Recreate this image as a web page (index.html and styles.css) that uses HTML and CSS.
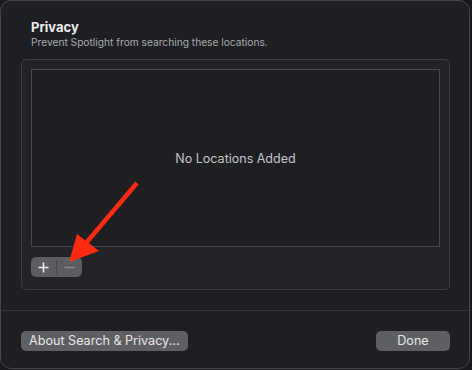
FILE: index.html
```html
<!DOCTYPE html>
<html lang="en">
<head>
  <meta charset="UTF-8" />
  <title>Spotlight Privacy</title>
  <link rel="stylesheet" href="styles.css">
</head>
<body>

  <div class="sheet">
    <div class="sheet-body">
      <div class="heading">
        <h1>Privacy</h1>
        <p>Prevent Spotlight from searching these locations.</p>
      </div>

      <div class="group">
        <div class="locations">No Locations Added</div>
        <div class="seg">
          <span class="seg-btn">
            <svg width="11" height="11" viewBox="0 0 11 11"><path d="M5.5 0.5v10M0.5 5.5h10" stroke="#f0f0f0" stroke-width="1.6"/></svg>
          </span>
          <span class="seg-sep"></span>
          <span class="seg-btn">
            <svg width="11" height="11" viewBox="0 0 11 11"><path d="M0.5 5.5h10" stroke="#8c8d8f" stroke-width="1.4"/></svg>
          </span>
        </div>
      </div>
    </div>

    <div class="sheet-footer">
      <button class="btn">About Search &amp; Privacy...</button>
      <button class="btn done">Done</button>
    </div>

    <!-- annotation arrow drawn over the sheet -->
    <svg class="arrow" width="472" height="370" viewBox="0 0 472 370">
      <line x1="137" y1="183" x2="86" y2="243" stroke="#ff2a10" stroke-width="4.5" />
      <polygon points="69,262 77,234 99,251" fill="#ff2a10" />
    </svg>
  </div>

</body>
</html>
```

FILE: styles.css
```css
body {
  margin: 0;
  background-color: #18191c;
  font-family: Inter, 'Liberation Sans', sans-serif;
  color: #e4e4e4;
}

.sheet {
  position: relative;
  width: 470px;
  height: 369px;
  box-sizing: border-box;
  background-color: #1e1f23;
  border: 1px solid #46474b;
  border-radius: 11px;
  display: flex;
  flex-direction: column;
  overflow: hidden;
}

.sheet-body {
  padding: 0 19px 20px 20px;
  border-bottom: 1px solid #323337;
}

.heading {
  padding: 18px 10px 0 10px;
  height: 40px;
}

.heading h1 {
  margin: 0;
  font-size: 13px;
  font-weight: 700;
  line-height: 16px;
  color: #ececec;
}

.heading p {
  margin: 0;
  font-size: 10.2px;
  line-height: 14px;
  color: #a9aaac;
}

.group {
  height: 231px;
  box-sizing: border-box;
  background-color: #222327;
  border: 1px solid #3d3e42;
  border-radius: 5px;
  padding: 9px 9px 0 9px;
}

.locations {
  height: 178px;
  box-sizing: border-box;
  background-color: #1e1f23;
  border: 1px solid #48494d;
  display: flex;
  align-items: center;
  justify-content: center;
  font-size: 12.5px;
  color: #c4c4c6;
}

.seg {
  margin-top: 10px;
  width: 51px;
  height: 20px;
  background-color: #5c5d60;
  border-radius: 5px;
  display: flex;
  align-items: center;
}

.seg-btn {
  flex: 1;
  height: 20px;
  display: flex;
  align-items: center;
  justify-content: center;
}

.seg-sep {
  width: 1px;
  height: 14px;
  background-color: #47484b;
}

.sheet-footer {
  display: flex;
  justify-content: space-between;
  padding: 20px 19px 0 20px;
}

.btn {
  height: 20px;
  padding: 0 8px;
  border: none;
  border-radius: 5px;
  background-color: #5e5f62;
  color: #e6e6e6;
  font-family: inherit;
  font-size: 12.6px;
  line-height: 20px;
}

.btn.done {
  width: 74px;
}

.arrow {
  position: absolute;
  left: -1px;
  top: -1px;
  pointer-events: none;
}
```
